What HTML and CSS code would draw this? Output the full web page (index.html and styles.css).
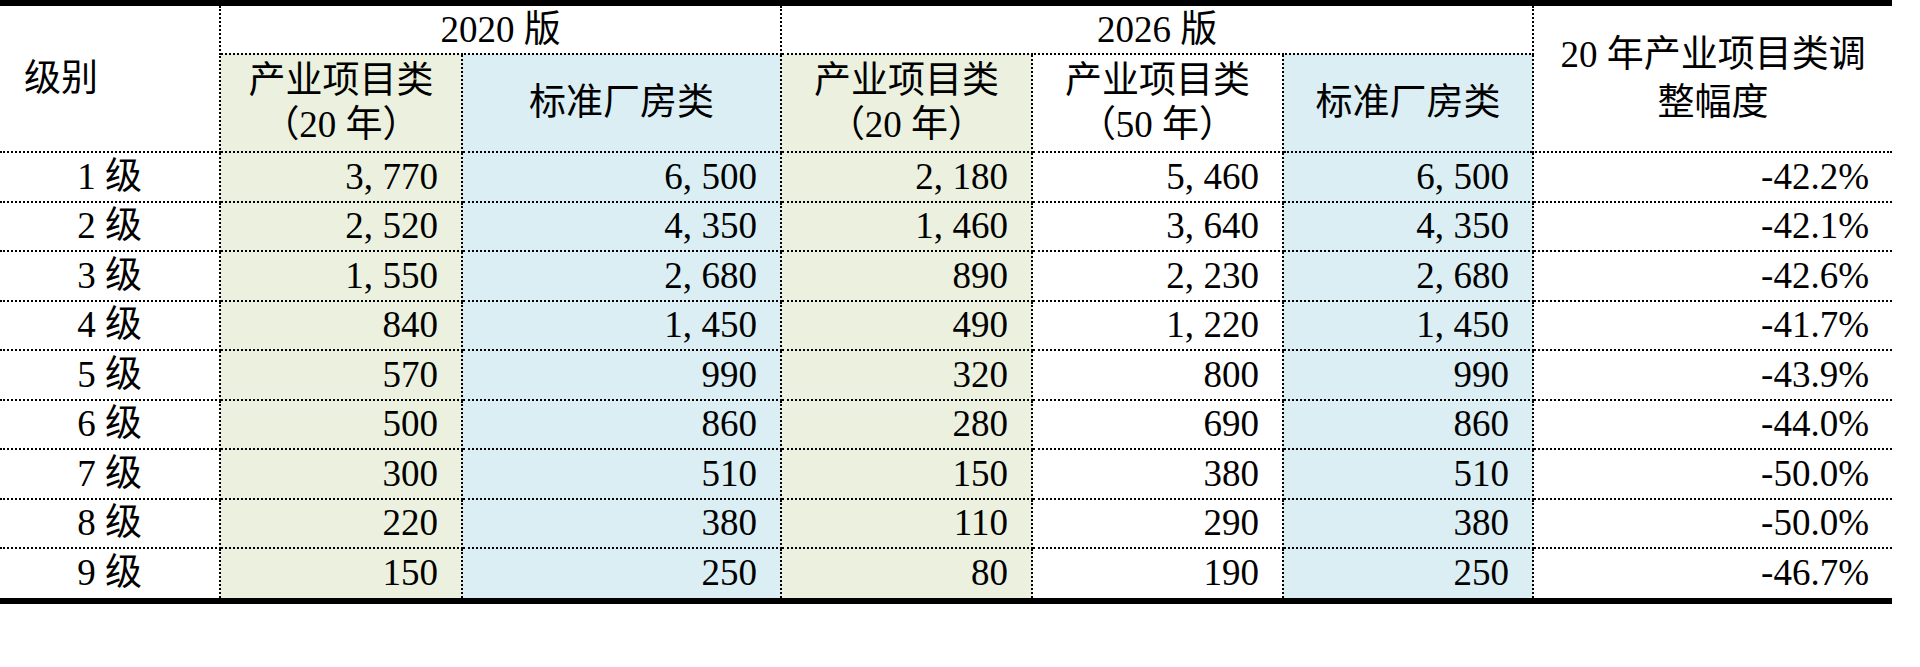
FILE: index.html
```html
<!DOCTYPE html>
<html lang="zh-CN">
<head>
<meta charset="utf-8">
<title>级别价格表</title>
<link rel="stylesheet" href="styles.css">
</head>
<body>
<div class="sheet">
<table class="grid">
<colgroup>
<col class="w-level"><col class="w-a"><col class="w-b"><col class="w-c"><col class="w-d"><col class="w-e"><col class="w-f">
</colgroup>
<thead>
<tr class="h1">
<th rowspan="2" class="first level-h">级别</th>
<th colspan="2" class="ver">2020 版</th>
<th colspan="3" class="ver">2026 版</th>
<th rowspan="2" class="last chg-h">20 年产业项目类调<br>整幅度</th>
</tr>
<tr class="h2">
<th class="g">产业项目类<br>（20 年）</th>
<th class="b">标准厂房类</th>
<th class="g">产业项目类<br>（20 年）</th>
<th>产业项目类<br>（50 年）</th>
<th class="b">标准厂房类</th>
</tr>
</thead>
<tbody>
<tr><td class="first lv">1 级</td><td class="g">3<span class="sep">,</span>770</td><td class="b">6<span class="sep">,</span>500</td><td class="g">2<span class="sep">,</span>180</td><td>5<span class="sep">,</span>460</td><td class="b">6<span class="sep">,</span>500</td><td class="last">-42.2%</td></tr>
<tr><td class="first lv">2 级</td><td class="g">2<span class="sep">,</span>520</td><td class="b">4<span class="sep">,</span>350</td><td class="g">1<span class="sep">,</span>460</td><td>3<span class="sep">,</span>640</td><td class="b">4<span class="sep">,</span>350</td><td class="last">-42.1%</td></tr>
<tr><td class="first lv">3 级</td><td class="g">1<span class="sep">,</span>550</td><td class="b">2<span class="sep">,</span>680</td><td class="g">890</td><td>2<span class="sep">,</span>230</td><td class="b">2<span class="sep">,</span>680</td><td class="last">-42.6%</td></tr>
<tr><td class="first lv">4 级</td><td class="g">840</td><td class="b">1<span class="sep">,</span>450</td><td class="g">490</td><td>1<span class="sep">,</span>220</td><td class="b">1<span class="sep">,</span>450</td><td class="last">-41.7%</td></tr>
<tr><td class="first lv">5 级</td><td class="g">570</td><td class="b">990</td><td class="g">320</td><td>800</td><td class="b">990</td><td class="last">-43.9%</td></tr>
<tr><td class="first lv">6 级</td><td class="g">500</td><td class="b">860</td><td class="g">280</td><td>690</td><td class="b">860</td><td class="last">-44.0%</td></tr>
<tr><td class="first lv">7 级</td><td class="g">300</td><td class="b">510</td><td class="g">150</td><td>380</td><td class="b">510</td><td class="last">-50.0%</td></tr>
<tr><td class="first lv">8 级</td><td class="g">220</td><td class="b">380</td><td class="g">110</td><td>290</td><td class="b">380</td><td class="last">-50.0%</td></tr>
<tr><td class="first lv">9 级</td><td class="g">150</td><td class="b">250</td><td class="g">80</td><td>190</td><td class="b">250</td><td class="last">-46.7%</td></tr>
</tbody>
</table>
</div>
</body>
</html>
```

FILE: styles.css
```css
html, body {
  margin: 0;
  padding: 0;
  background: #ffffff;
}

body {
  font-family: "Liberation Serif", "Noto Sans CJK SC", serif;
  color: #000;
}

.sheet {
  width: 1892px;
  border-top: 6px solid #000;
  border-bottom: 6px solid #000;
}

.grid {
  width: 100%;
  border-collapse: collapse;
  table-layout: fixed;
  font-size: 37px;
}

.w-level { width: 220px; }
.w-a { width: 242px; }
.w-b { width: 319px; }
.w-c { width: 251px; }
.w-d { width: 251px; }
.w-e { width: 250px; }
.w-f { width: 359px; }

.grid th,
.grid td {
  border: 2px dotted #000;
  padding: 0 23px;
  font-weight: 400;
  vertical-align: middle;
  white-space: nowrap;
  line-height: 44px;
}

.grid td {
  text-align: right;
}

.grid th {
  text-align: center;
}

.grid tr:first-child th {
  border-top: none;
}

.grid tbody tr:last-child td {
  border-bottom: none;
}

.grid .first { border-left: none; }
.grid .last { border-right: none; }

.grid .level-h { text-align: left; padding-left: 24px; }
.grid .chg-h { line-height: 48px; }
.grid .lv { text-align: center; }

.sep { margin-right: 0.26em; }

.h1 { height: 48px; }
.h2 { height: 98px; }
.grid tbody tr { height: 49.5px; }

.g { background: #ebf1de; }
.b { background: #daeef3; }
```
